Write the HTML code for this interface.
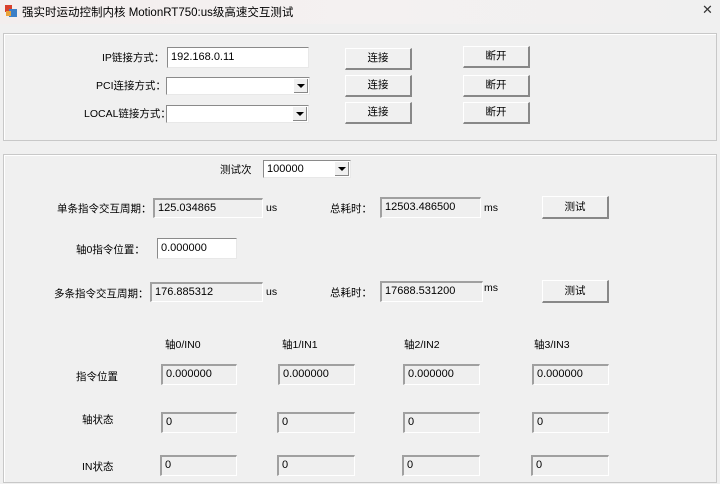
<!DOCTYPE html>
<html><head><meta charset="utf-8"><style>
*{box-sizing:border-box;margin:0;padding:0}
body{width:720px;height:484px;background:#f0f0f0;font-family:"Liberation Sans","Noto Sans CJK SC",sans-serif;font-size:10.5px;color:#000;position:relative;overflow:hidden}
.a{position:absolute;white-space:nowrap}
.title{left:0;top:0;width:720px;height:24px;background:linear-gradient(90deg,#f3eeee,#f4f1f1 50%,#f0f0f0)}
.grp{border:1px solid #c8c8c8;box-shadow:inset 1px 1px 0 #fff}
.in{background:#fff;border-top:1px solid #8a8a8a;border-left:1px solid #8a8a8a;border-right:1px solid #e8e8e8;border-bottom:1px solid #e8e8e8;padding:2px 3px;line-height:14px;font-size:11px}
.ro{background:#efefef;border-top:2px solid #a0a0a0;border-left:2px solid #a0a0a0;border-right:1px solid #fff;border-bottom:1px solid #fff;padding:1px 3px;line-height:14px;font-size:11px}
.btn{background:#f0f0f0;border-top:1px solid #fff;border-left:1px solid #fff;border-right:2px solid #888;border-bottom:2px solid #888;text-align:center;font-size:10.5px}
.dd{position:absolute;right:1px;top:1px;width:14px;bottom:1px;background:#f0f0f0;border-right:1px solid #888;border-bottom:1px solid #888}
.dd:after{content:"";position:absolute;left:3px;top:5px;border-left:4px solid transparent;border-right:4px solid transparent;border-top:4px solid #000}
</style></head><body>
<div class="a title"></div>
<div class="a" style="left:5px;top:5px;width:12px;height:12px">
<div class="a" style="left:0;top:0;width:7px;height:7px;background:#d8402c"></div>
<div class="a" style="left:4px;top:4px;width:8px;height:8px;background:#3c7fc6"></div>
<div class="a" style="left:1px;top:6px;width:5px;height:5px;background:#e9a23b"></div></div>
<div class="a" style="left:22px;top:4px;font-size:11.5px">强实时运动控制内核 MotionRT750:us级高速交互测试</div>
<div class="a" style="left:702px;top:3px;font-size:13px;color:#333;font-family:'DejaVu Sans',sans-serif">✕</div>

<div class="a grp" style="left:3px;top:33px;width:714px;height:108px"></div>
<div class="a" style="left:102px;top:50px">IP链接方式：</div>
<div class="a in" style="left:167px;top:47px;width:142px;height:21px">192.168.0.11</div>
<div class="a" style="left:96px;top:78px">PCI连接方式：</div>
<div class="a in" style="left:166px;top:77px;width:144px;height:18px"><div class="dd"></div></div>
<div class="a" style="left:84px;top:106px">LOCAL链接方式：</div>
<div class="a in" style="left:166px;top:105px;width:143px;height:18px"><div class="dd"></div></div>
<div class="a btn" style="left:345px;top:48px;width:67px;height:22px;line-height:19px">连接</div>
<div class="a btn" style="left:345px;top:75px;width:67px;height:22px;line-height:19px">连接</div>
<div class="a btn" style="left:345px;top:102px;width:67px;height:22px;line-height:19px">连接</div>
<div class="a btn" style="left:463px;top:46px;width:67px;height:22px;line-height:19px">断开</div>
<div class="a btn" style="left:463px;top:75px;width:67px;height:22px;line-height:19px">断开</div>
<div class="a btn" style="left:463px;top:102px;width:67px;height:22px;line-height:19px">断开</div>

<div class="a grp" style="left:3px;top:154px;width:714px;height:329px"></div>
<div class="a" style="left:220px;top:162px">测试次</div>
<div class="a in" style="left:263px;top:160px;width:88px;height:18px;padding:1px 3px">100000<div class="dd"></div></div>

<div class="a" style="left:57px;top:201px">单条指令交互周期：</div>
<div class="a ro" style="left:153px;top:198px;width:110px;height:20px">125.034865</div>
<div class="a" style="left:266px;top:202px">us</div>
<div class="a" style="left:330px;top:201px">总耗时：</div>
<div class="a ro" style="left:380px;top:197px;width:101px;height:21px">12503.486500</div>
<div class="a" style="left:484px;top:202px">ms</div>
<div class="a btn" style="left:542px;top:196px;width:67px;height:23px;line-height:20px">测试</div>

<div class="a" style="left:76px;top:242px">轴0指令位置：</div>
<div class="a in" style="left:157px;top:238px;width:80px;height:21px">0.000000</div>

<div class="a" style="left:54px;top:286px">多条指令交互周期：</div>
<div class="a ro" style="left:150px;top:282px;width:113px;height:20px">176.885312</div>
<div class="a" style="left:266px;top:286px">us</div>
<div class="a" style="left:330px;top:285px">总耗时：</div>
<div class="a ro" style="left:380px;top:281px;width:103px;height:21px">17688.531200</div>
<div class="a" style="left:484px;top:282px">ms</div>
<div class="a btn" style="left:542px;top:280px;width:67px;height:23px;line-height:20px">测试</div>

<div class="a" style="left:165px;top:337px">轴0/IN0</div>
<div class="a" style="left:282px;top:337px">轴1/IN1</div>
<div class="a" style="left:404px;top:337px">轴2/IN2</div>
<div class="a" style="left:534px;top:337px">轴3/IN3</div>

<div class="a" style="left:76px;top:369px">指令位置</div>
<div class="a ro" style="left:161px;top:364px;width:76px;height:21px">0.000000</div>
<div class="a ro" style="left:278px;top:364px;width:77px;height:21px">0.000000</div>
<div class="a ro" style="left:403px;top:364px;width:77px;height:21px">0.000000</div>
<div class="a ro" style="left:532px;top:364px;width:77px;height:21px">0.000000</div>

<div class="a" style="left:82px;top:412px">轴状态</div>
<div class="a ro" style="left:161px;top:412px;width:76px;height:21px">0</div>
<div class="a ro" style="left:277px;top:412px;width:78px;height:21px">0</div>
<div class="a ro" style="left:403px;top:412px;width:77px;height:21px">0</div>
<div class="a ro" style="left:532px;top:412px;width:77px;height:21px">0</div>

<div class="a" style="left:82px;top:459px">IN状态</div>
<div class="a ro" style="left:160px;top:455px;width:77px;height:21px">0</div>
<div class="a ro" style="left:277px;top:455px;width:78px;height:21px">0</div>
<div class="a ro" style="left:402px;top:455px;width:78px;height:21px">0</div>
<div class="a ro" style="left:531px;top:455px;width:78px;height:21px">0</div>
</body></html>
